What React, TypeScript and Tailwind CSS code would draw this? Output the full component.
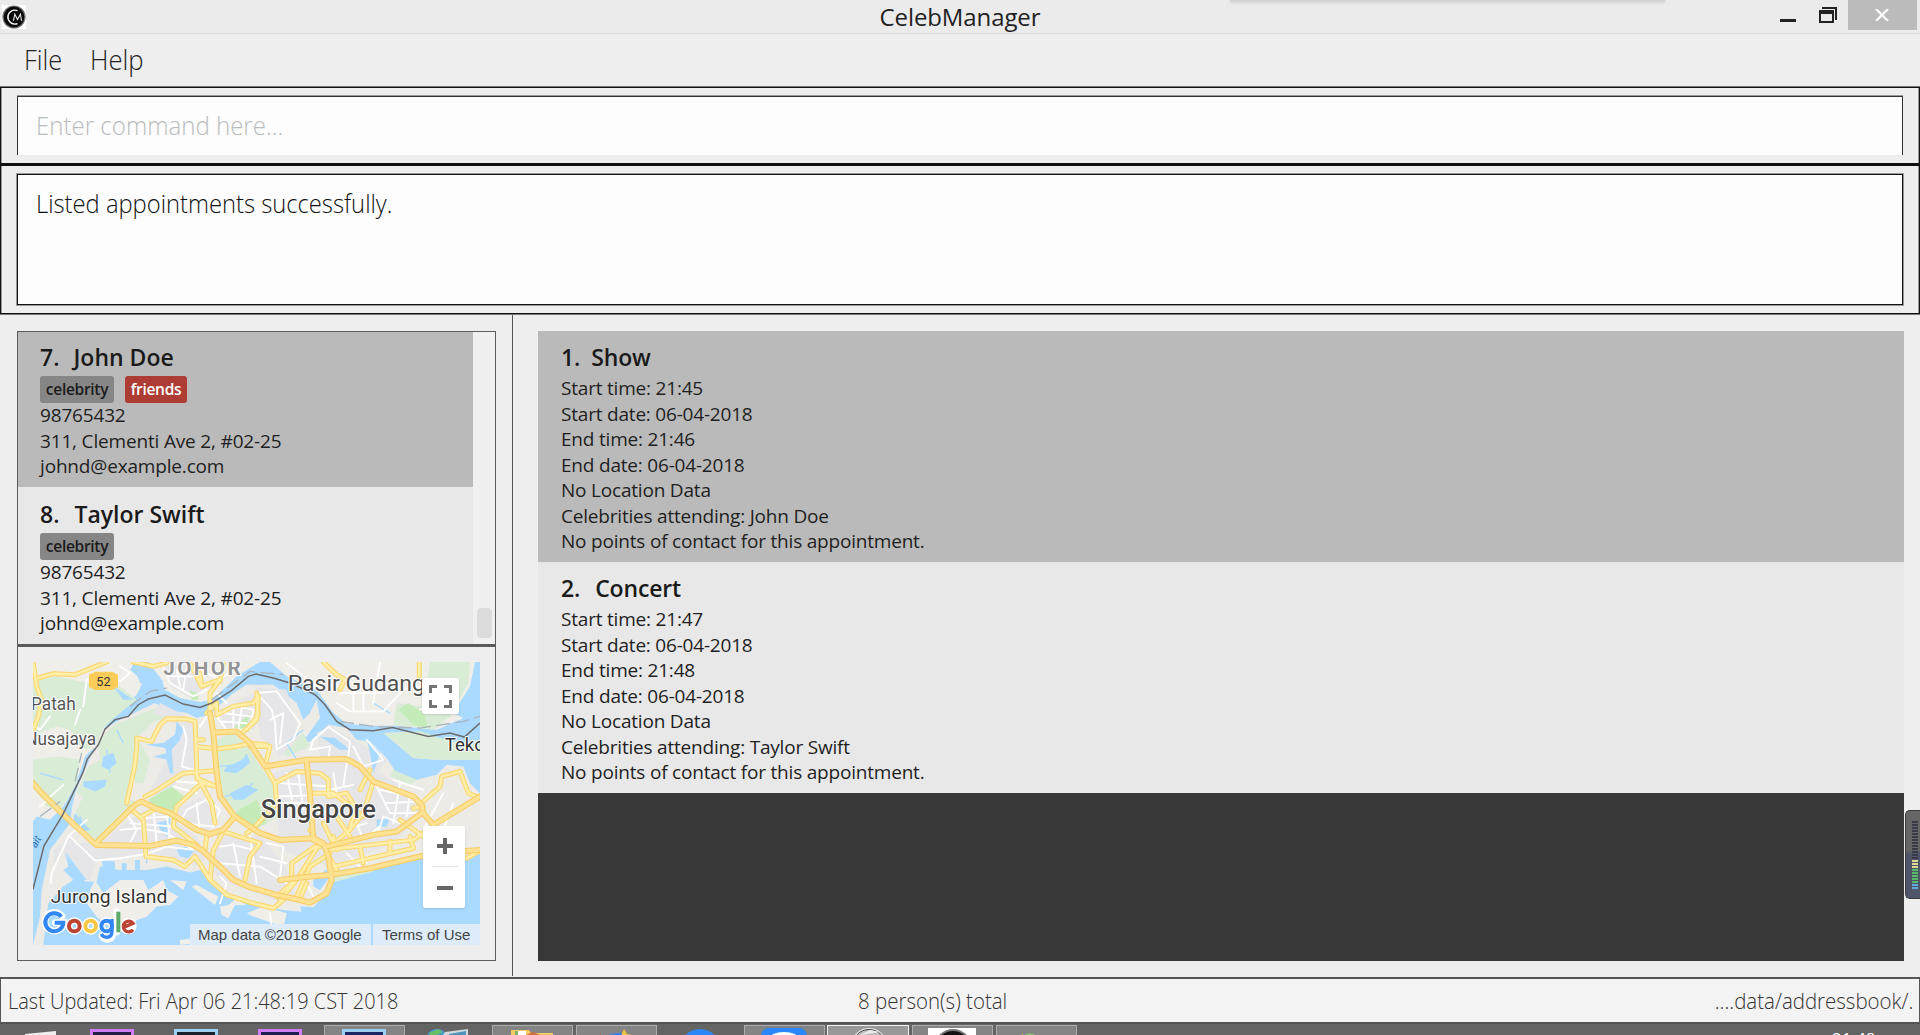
import React from "react";

const PERSONS = [
  { id: 7, name: "John Doe", tags: ["celebrity", "friends"], box: "h-[155px] pt-[9px] bg-[#bababa]", gap: "pl-[14px]" },
  { id: 8, name: "Taylor Swift", tags: ["celebrity"], box: "h-[157px] pt-[11px] bg-[#e8e8e8]", gap: "pl-[15px]" },
];

const APPOINTMENTS = [
  { id: 1, title: "Show", start: "21:45", end: "21:46", who: "John Doe", bg: "bg-[#bababa]", gap: "pl-[11px]" },
  { id: 2, title: "Concert", start: "21:47", end: "21:48", who: "Taylor Swift", bg: "bg-[#e8e8e8]", gap: "pl-[15px]" },
];

function TitleBar() {
  return (
    <header className="relative flex h-[34px] shrink-0 items-start justify-between border-b border-[#d9d9d9] bg-[#ebebeb]">
      <div className="ml-[2px] mt-[5px] h-6 w-6 bg-white">
        <svg viewBox="0 0 24 24" className="h-6 w-6">
          <circle cx="12" cy="12" r="11.6" fill="#777" />
          <circle cx="12" cy="12" r="10.4" fill="#0a0a0a" />
          <path d="M15.5 5.6A7 7 0 1 0 15.5 18.6" fill="none" stroke="#fff" strokeWidth="1.3" />
          <path d="M9.4 6.2A6.6 6.6 0 0 0 9.4 18" fill="none" stroke="#ddd" strokeWidth="0.8" />
          <path d="M11.4 15.8 12.8 9.2 15.5 14.6 18.4 9.2 19.6 15.8" fill="none" stroke="#e4e4e4" strokeWidth="1.1" />
        </svg>
      </div>
      <h1 className="absolute left-1/2 top-0 -translate-x-1/2 whitespace-nowrap text-[24px] leading-[34px] tracking-[-0.1px] text-[#222]">CelebManager</h1>
      <div className="absolute left-[1230px] top-0 h-[2px] w-[435px] bg-[#d4d4d4] shadow-[0_1px_3px_#cfd3cf]" />
      <div className="flex items-start pr-[3px]">
        <div className="mr-[23px] mt-[19px] h-[3px] w-4 bg-[#222]" />
        <svg viewBox="0 0 18 16" className="mr-[11px] mt-[7px] h-4 w-[18px]">
          <path d="M3 0H18V13H16V2H3Z" fill="#222" />
          <path fillRule="evenodd" d="M0 3H15V16H0ZM2 7V14H13V7Z" fill="#222" />
        </svg>
        <div className="flex h-[30px] w-[69px] items-center justify-center bg-[#bbb] pr-[2px]">
          <svg viewBox="0 0 14 12" className="h-3 w-[14px]">
            <path d="M1 0 13 12M13 0 1 12" stroke="#fff" strokeWidth="2.2" />
          </svg>
        </div>
      </div>
    </header>
  );
}

function Tag({ label }: { label: string }) {
  const color = label === "friends" ? "bg-[#ad3c35] text-white w-[62px]" : "bg-[#868686] text-[#1b1b1b] w-[74px]";
  return (
    <span className={`flex h-[27px] items-center justify-center rounded-[3px] text-[15.5px] font-semibold tracking-[-0.3px] ${color}`}>
      {label}
    </span>
  );
}

function PersonList() {
  return (
    <div className="flex h-[312px]">
      <ul className="w-[455px]">
        {PERSONS.map((p) => (
          <li key={p.id} className={`pl-[22px] ${p.box}`}>
            <h2 className="flex h-8 text-[23px] font-semibold leading-8">
              <span>{p.id}.</span>
              <span className={p.gap}>{p.name}</span>
            </h2>
            <div className="mt-[3px] flex h-[27px] items-start gap-[11px]">
              {p.tags.map((t) => (
                <Tag key={t} label={t} />
              ))}
            </div>
            <div className="text-[19px] leading-[25.5px] tracking-[-0.17px] text-[#1f1f1f]">
              <p>98765432</p>
              <p>311, Clementi Ave 2, #02-25</p>
              <p>johnd@example.com</p>
            </div>
          </li>
        ))}
      </ul>
      <div className="flex flex-1 flex-col items-center justify-end bg-[#f0f0f0] pb-[6px] pl-px">
        <div className="h-[30px] w-[15px] rounded-[4px] bg-[#dcdcdc]" />
      </div>
    </div>
  );
}

const GREENS = [
  "M39 95 110 80 200 100 300 110 350 150 300 190 250 235 230 280 200 300 170 280 150 240 110 230 60 250 39 240Z",
  "M39 330 120 320 180 330 170 400 120 480 80 470 39 400Z",
  "M285 225 420 170 470 200 400 215 350 265 335 360 320 450 360 455 280 530 220 575 160 500 190 440 170 430 205 350 240 330 235 270Z",
  "M590 270 640 250 690 300 720 350 760 400 790 500 730 520 660 490 610 460 590 380Z",
  "M360 280 390 330 370 400 345 400 340 310Z",
  "M770 290 850 250 870 290 800 320Z",
  "M1090 250 1200 245 1290 275 1380 285 1380 330 1250 330 1180 325Z",
  "M1230 37 1350 37 1345 100 1290 200 1240 240 1120 225 1130 160 1210 170Z",
  "M1120 360 1190 390 1170 405 1110 380Z",
  "M930 685 1060 650 1060 665 950 695Z",
];

const DARK_GREENS = [
  "M385 450 455 410 500 445 455 485 400 470Z",
  "M640 490 710 450 740 520 700 540Z",
  "M1135 180 1165 160 1210 190 1225 235 1180 225Z",
  "M510 125 535 130 535 150 515 150Z",
  "M640 235 690 190 680 240Z",
];

const URBAN = [
  "M290 540 370 480 460 510 530 560 560 620 530 650 400 610 230 630 170 580 250 575Z",
  "M420 160 520 210 530 360 480 390 420 440 390 420 440 330 480 230 400 190Z",
  "M470 480 540 440 600 500 560 550 480 520Z",
  "M600 180 700 130 740 150 700 240 620 250Z",
  "M700 110 800 120 840 260 780 320 720 260Z",
  "M760 370 900 330 1020 330 1190 440 1210 500 1100 590 920 650 780 600Z",
  "M890 250 930 230 1000 270 1100 330 1060 380 900 320Z",
  "M590 560 720 560 790 640 830 740 760 750 600 690 560 630Z",
  "M430 50 530 45 560 110 520 150 450 110Z",
  "M150 560 230 630 210 690 180 690 130 600 100 650 100 600Z",
];

const WATERS = [
  "M470 215 490 240 480 270 455 300 460 370 450 370 440 330 400 320 440 310 435 295 375 285 430 280 465 255Z",
  "M190 395 260 390 255 410 225 425 190 410Z",
  "M250 320 280 310 290 340 265 360 245 350Z",
  "M620 350 670 330 680 310 690 340 650 370 610 365Z",
  "M630 430 680 405 715 420 670 450 640 450Z",
  "M470 600 500 590 525 600 505 625 480 620Z",
  "M410 520 450 510 445 550 425 545Z",
  "M280 110 310 130 340 150 310 150Z",
  "M345 60 400 75 430 95 420 110 360 100Z",
  "M1070 510 1110 505 1100 530 1070 530Z",
  "M165 490 210 540 195 545 160 510Z",
  "M900 260 945 265 990 300 960 300Z",
  "M1040 270 1080 310 1060 370 1050 310Z",
  "M880 690 930 650 930 680 900 720 880 710Z",
  "M245 630 285 635 285 660 250 665ZM305 640 320 640 320 670 305 670ZM345 630 360 630 360 670 345 670ZM135 605 200 690 175 690Z",
];

const MINOR = [
  "M92 700 95 670 145 560 150 560 225 632 300 625 380 612 440 590 520 600",
  "M150 555 200 510M60 470 130 405M190 170 200 90 250 75 300 95 330 70 300 50M39 225 60 240 90 200M165 225 180 180",
  "M300 540 360 535 440 550 520 600M320 490 350 540 330 580M400 480 410 580M440 490 450 580M360 505 460 500M330 520 460 530",
  "M490 230 500 270 485 350 520 360M470 395 540 400M460 410 530 430M540 230 560 200M500 480 560 450 600 480 580 530 480 520 500 480M530 460 540 550",
  "M590 200 650 170 700 180 690 240 620 240ZM600 215 680 220M640 175 640 245M665 175 655 240M610 190 690 200",
  "M710 130 770 125 840 220 820 270 770 300 765 220 755 180 710 130M750 210 790 190 780 280",
  "M870 300 880 270 925 232 990 275 985 320M925 330 930 290 870 300M1000 290 1040 370M1040 270 1090 330 1030 350",
  "M780 400 930 410M770 440 920 435M800 370 820 470M835 370 850 480M880 430 1000 405M940 370 950 430M980 340 970 410M760 460 870 460",
  "M1060 390 1110 490 1200 490M1080 420 1180 440M1120 390 1210 420M1100 460 1190 455M1140 400 1120 520M1170 430 1160 500",
  "M1070 560 1090 500 1140 520M1010 520 1030 570 1080 530M960 500 970 540 1040 520M1270 430 1215 530M1300 460 1270 540",
  "M640 580 660 680M600 590 640 585 700 600M600 640 720 650 800 700M690 560 710 700M740 580 790 590 780 680M720 620 800 640M600 680 620 700 600 760",
  "M430 50 450 100 520 140 560 120M470 60 480 110M500 50 490 120M440 80 550 80M540 60 600 90 640 60M590 130 620 160",
  "M950 160 990 185 1090 185 1150 120 1200 110M960 130 1090 130M1000 120 1000 185M1030 100 1030 185M1080 37 1060 160M800 40 890 110 960 110M1200 180 1250 160 1290 170",
  "M750 790 755 830 780 850M860 700 880 740M980 610 1020 650M1040 640 1010 590",
];

const ROADS = [
  "M39 400 60 425 128 492 228 585 390 588 470 572 520 585 545 600 600 650 640 690 690 712 770 735 830 748 870 758 920 730 935 690 925 620 910 580 880 565 780 570 720 550 645 500 610 540 570 553 530 540 450 490 405 475 365 455 345 465 228 580",
  "M570 190 580 250 590 370 600 440 640 495",
  "M590 248 650 245 690 280 735 350 860 330 980 328 1020 350 1060 395 1180 440 1205 465 1210 490 1240 525 1380 440",
  "M1205 490 1130 545 1060 555 920 590 880 570 870 430 860 335",
  "M780 690 870 680 930 675 1050 655 1240 610 1380 600",
];

const ARTERIES = [
  "M39 37 50 110 65 150 55 200 39 240M55 85 100 72 165 75 260 37",
  "M320 460 345 345 350 290 350 265 395 275 420 225 440 207 500 208 525 215 530 340 530 375 575 460 585 520",
  "M375 440 405 425 490 370 590 362M530 290 590 298 650 290 690 280 740 285",
  "M550 270 530 270M330 475 370 510 378 620 460 630 495 650 525 620 545 650 570 690 620 735 700 760 760 775 790 750",
  "M365 500 400 480M465 490 470 470 545 400 590 410M465 490 460 530 530 585",
  "M560 560 555 600M570 690 580 600 610 545 720 580 690 620 675 690M530 385 590 410",
  "M560 190 570 180 590 160 590 195 640 170 700 160 715 140 710 210 665 250M540 70 545 110 600 90 570 130 570 190M340 37 400 50 440 40M510 40 545 110M610 40 600 95",
  "M710 130 715 195 680 240M735 350 765 400 770 460 700 535 680 550M765 400 830 365 900 370 925 390 925 440 980 430 1010 480 990 530",
  "M690 290 750 290 735 350M870 430 940 430 980 460 1030 500M1060 395 1030 490 990 540 930 590",
  "M1050 360 1020 420M920 600 1180 570 1215 545M940 650 1180 595 1170 560M1020 590 1030 640M1110 575 1110 610M1140 510 1210 560M1180 475 1210 470",
  "M1210 455 1260 410 1265 380 1320 365 1345 430 1380 445M885 590 815 640 815 700 770 740M900 580 830 690 780 750M930 610 870 650 830 740M940 560 950 600M870 540 900 590M910 520 940 580M950 500 990 560",
  "M910 37 950 75 975 90 960 120M1198 37 1198 80M930 625 950 660M1380 602 1340 625M840 745 860 700",
];

function Roads({ list, outer, inner, wide }: { list: string[]; outer: string; inner: string; wide: number }) {
  return (
    <g fill="none" strokeLinejoin="round" strokeLinecap="round">
      {list.map((d) => (
        <path key={d} d={d} stroke={outer} strokeWidth={wide} />
      ))}
      {list.map((d) => (
        <path key={d} d={d} stroke={inner} strokeWidth={wide - 7} />
      ))}
    </g>
  );
}

function MapView() {
  return (
    <div className="relative ml-[15px] mt-[15px] h-[283px] w-[447px] overflow-hidden">
      <svg viewBox="39 37 1341 848" preserveAspectRatio="none" className="h-full w-full font-[Roboto]">
        <rect x="39" y="37" width="1341" height="848" fill="#aadaff" />
        <g fill="#f0eee8">
          <path d="M39 37H345L330 60 370 95 350 135 325 155 300 190 265 215 245 250 225 290 195 320 180 365 165 410 130 470 90 510 50 500 39 515Z" />
          <path d="M385 37H720L690 55 650 80 620 110 575 150 540 157 480 145 435 120 425 90Z" />
          <path d="M750 37H1365L1350 110 1300 190 1330 205 1250 240 1130 228 1040 228 980 222 940 190 890 120 800 80Z" />
          <path d="M1090 250 1200 245 1290 275 1380 285V330L1250 330 1180 325Z" />
        </g>
        <path
          fill="#ecebe6"
          d="M250 240 300 210 380 172 405 160 440 180 500 190 530 205 570 195 600 165 640 130 680 105 760 105 830 160 850 210 870 190 890 150 900 205 860 260 800 310 880 270 925 225 980 235 1010 270 1050 275 1100 325 1130 370 1190 390 1250 375 1280 345 1330 350 1350 400 1380 430V610L1340 625 1210 622 1090 652 990 680 930 700 930 720 880 772 840 770 845 785 790 780 700 765 640 740 610 720 570 690 540 660 510 668 440 650 380 660 300 660 240 650 230 695 195 695 160 650 135 610 145 650 130 660 160 690 130 710 85 760 70 885 39 885 60 800 65 720 90 600 150 520 155 480 165 430 190 370 210 325 225 285Z"
        />
        <path fill="#f0eee8" d="M210 720 225 690 250 730 300 690 370 690 385 720 430 690 440 720 475 740 450 765 410 770 380 800 350 810 320 850 280 840 230 800 200 760ZM515 710 530 705 595 740 585 765ZM600 770 625 765 650 745 680 765 645 765 625 805 605 795ZM680 790 730 770 800 790 790 830 700 800ZM450 690 500 695 490 720ZM480 870 520 865 540 880 480 884Z" />
        <g fill="#d8ecd6">{GREENS.map((d) => <path key={d} d={d} />)}</g>
        <g fill="#e6e6e8">{URBAN.map((d) => <path key={d} d={d} />)}</g>
        <g fill="#c5ebb9">{DARK_GREENS.map((d) => <path key={d} d={d} />)}</g>
        <g fill="#aadaff">{WATERS.map((d) => <path key={d} d={d} />)}</g>
        <g fill="none" stroke="#aadaff" strokeWidth="4">
          <path d="M600 350 650 345 680 320M615 440 660 430 700 400M200 560 180 500M260 300 270 370M290 240 310 280M60 370 130 390M1060 160 1110 190M830 330 800 280 850 240M450 500 440 560M380 660V690M380 640V600" />
        </g>
        <g fill="none" stroke="#fff" strokeWidth="5.5" strokeLinejoin="round" strokeLinecap="round">
          {MINOR.map((d) => <path key={d} d={d} />)}
        </g>
        <Roads list={ARTERIES} outer="#fbd772" inner="#ffeea8" wide={15} />
        <Roads list={ROADS} outer="#f8cd68" inner="#fde293" wide={18} />
        <g fill="none" stroke="#a9b4bd" strokeWidth="4" strokeDasharray="42 16">
          <path d="M60 500 120 455M165 395 185 310M330 170 390 125 440 115M575 150 690 65 790 75M960 215 1060 230 1200 235 1330 215 1380 200" />
        </g>
        <path fill="none" stroke="#6c6c6c" strokeWidth="4.5" d="M39 718 72 588 128 495 188 370 202 328 235 285 255 238 285 210 325 200 355 165 385 148 435 136 490 163 540 173 575 160 635 122 685 80 708 73 760 85 810 100 855 120 885 135 915 165 950 215 990 240 1060 243 1118 233 1225 260 1290 250 1333 262 1380 220" />
        <path d="M207 75 225 66H276L294 75V112L276 121H225L207 112Z" fill="#fbcd58" />
        <g stroke="#fff" strokeWidth="6" strokeLinejoin="round" paintOrder="stroke" fill="#4a4a4a">
          <text x="229" y="108" fontSize="38" fill="#333" stroke="none">52</text>
          <text x="430" y="75" fontSize="62" fontWeight="700" fill="#949494" textLength="232">JOHOR</text>
          <text x="33" y="181" fontSize="53" fill="#555" textLength="134" lengthAdjust="spacingAndGlyphs">Patah</text>
          <text x="16" y="286" fontSize="53" fill="#555" textLength="212" lengthAdjust="spacingAndGlyphs">Nusajaya</text>
          <text x="803" y="125" fontSize="64" fill="#505050" textLength="412" lengthAdjust="spacingAndGlyphs">Pasir Gudang</text>
          <text x="1274" y="304" fontSize="56" fill="#333">Tekong</text>
          <text x="722" y="504" fontSize="75" fontWeight="500" fill="#444" textLength="346" lengthAdjust="spacingAndGlyphs">Singapore</text>
          <text x="92" y="759" fontSize="57" fill="#333" textLength="350" lengthAdjust="spacingAndGlyphs">Jurong Island</text>
        </g>
        <text x="48" y="596" fontSize="32" fontStyle="italic" fill="#2c6dad" transform="rotate(-60 48 596)">ait</text>
        <g fill="none" strokeWidth="12">
          <g stroke="#fff" strokeWidth="20" strokeLinecap="round">
            <path d="M126 799A28 28 0 1 0 131 818H106M290 785V846M278 857A17 17 0 0 1 246 857" />
            <circle cx="163" cy="828" r="16" /><circle cx="212" cy="828" r="16" /><circle cx="261" cy="828" r="16" /><circle cx="325" cy="828" r="15" />
          </g>
          <path d="M124 800A27 27 0 1 0 130 818H104" stroke="#3287f5" />
          <circle cx="163" cy="828" r="16" stroke="#bd4334" />
          <circle cx="212" cy="828" r="16" stroke="#f8c745" />
          <path d="M276 807V843Q276 862 260 862 248 862 244 852" stroke="#3287f5" strokeWidth="10" />
          <circle cx="260" cy="828" r="16" stroke="#3287f5" />
          <path d="M295 785V847" stroke="#5bac68" />
          <path d="M309 833 339 820A16 16 0 1 0 339 839" stroke="#bd4334" strokeWidth="10" />
        </g>
      </svg>
      <div className="absolute right-[21px] top-[16px] flex h-[36px] w-[37px] items-center justify-center rounded-[2px] bg-white shadow-sm">
        <svg viewBox="0 0 23 23" className="h-[23px] w-[23px]" fill="none" stroke="#757575" strokeWidth="3">
          <path d="M1.5 8V1.5H8M15 1.5H21.5V8M21.5 15V21.5H15M8 21.5H1.5V15" />
        </svg>
      </div>
      <div className="absolute bottom-[37px] right-[15px] flex h-[82px] w-[42px] flex-col items-center rounded-[2px] bg-white pl-px shadow">
        <div className="flex h-[40px] items-center">
          <svg viewBox="0 0 16 16" className="h-4 w-4"><path d="M8 0V16M0 8H16" stroke="#666" strokeWidth="4" /></svg>
        </div>
        <div className="h-px w-[26px] bg-[#e3e3e3]" />
        <div className="flex h-[41px] items-center">
          <div className="h-1 w-4 bg-[#666]" />
        </div>
      </div>
      <div className="absolute bottom-0 right-0 flex h-[21px] gap-[2px] whitespace-nowrap font-['Liberation_Sans'] text-[15px] leading-[21px] text-[#444]">
        <div className="w-[181px] bg-[#deebf8] pl-[8px]">Map data ©2018 Google</div>
        <div className="w-[107px] bg-[#deebf8] pl-[9px]">Terms of Use</div>
      </div>
    </div>
  );
}

function AppointmentList() {
  return (
    <div className="ml-[25px] mt-[17px] h-[630px] w-[1366px] bg-[#383838]">
      {APPOINTMENTS.map((a) => (
        <article key={a.id} className={`h-[231px] pl-[23px] pt-[10px] ${a.bg}`}>
          <h2 className="flex h-8 text-[23px] font-semibold leading-8 tracking-[-0.15px]">
            <span>{a.id}.</span>
            <span className={a.gap}>{a.title}</span>
          </h2>
          <div className="mt-[3px] text-[19px] leading-[25.5px] tracking-[-0.2px] text-[#1f1f1f]">
            <p>Start time: {a.start}</p>
            <p>Start date: 06-04-2018</p>
            <p>End time: {a.end}</p>
            <p>End date: 06-04-2018</p>
            <p>No Location Data</p>
            <p>Celebrities attending: {a.who}</p>
            <p>No points of contact for this appointment.</p>
          </div>
        </article>
      ))}
    </div>
  );
}

function Slot({ className, children }: { className: string; children?: React.ReactNode }) {
  return <div className={`h-full shrink-0 overflow-hidden ${className}`}>{children}</div>;
}

const ACTIVE = "w-[81px] border border-b-0 border-[#acacac] bg-[#848484]";

function Taskbar() {
  return (
    <footer className="relative flex h-[11px] shrink-0 overflow-hidden bg-[#646464] pt-px">
      <Slot className="w-[90px]"><svg className="h-[10px] w-[90px]"><path d="M25 9 56 6V10H25Z" fill="#eee" /></svg></Slot>
      <Slot className="mr-[40px] w-[44px] pt-1"><div className="h-3 border-[3px] border-[#d07dfa] bg-[#211f45]" /></Slot>
      <Slot className="mr-[40px] w-[44px] pt-1"><div className="h-3 border-[3px] border-[#9bd0f5] bg-[#17222c]" /></Slot>
      <Slot className="mr-[22px] w-[44px] pt-1"><div className="h-3 border-[3px] border-[#d07dfa] bg-[#1c1c50]" /></Slot>
      <Slot className={`${ACTIVE} pl-[17px] pt-[3px]`}><div className="h-3 w-[44px] border-[3px] border-[#9bd0f5] bg-[#1b2765]" /></Slot>
      <Slot className="w-[87px]">
        <svg className="h-[10px] w-[87px]"><circle cx="32" cy="15" r="11" fill="#4398cf" /><path d="M24 8 33 4 38 7 32 10H25Z" fill="#65bf69" /><path d="M40 7 63 4V10H38Z" fill="#d3d8db" /><path d="M44 9 61 6V10H44Z" fill="#4d94bc" /></svg>
      </Slot>
      <Slot className={ACTIVE}>
        <svg className="h-[10px] w-[81px]"><path d="M18 4H36L38 7H60V12H18Z" fill="#f1c967" /><path d="M23 5H33V9H23Z" fill="#fff" /><path d="M22 5H25V9H22Z" fill="#7fb268" /><path d="M33 9 40 6 47 9Z" fill="#d76f3c" /></svg>
      </Slot>
      <Slot className={`${ACTIVE} ml-[3px]`}>
        <svg className="h-[10px] w-[81px]"><ellipse cx="42" cy="13" rx="14" ry="6" fill="#2c83f0" /><path d="M47 3 50 8 55 9 50 12H43Z" fill="#f5c441" /><path d="M23 8 26 11H23Z" fill="#c3362e" /></svg>
      </Slot>
      <Slot className="w-[87px]"><svg className="h-[10px] w-[87px]"><circle cx="43" cy="24" r="20" fill="#2b87f5" /></svg></Slot>
      <Slot className={ACTIVE}>
        <svg className="h-[10px] w-[81px]"><rect x="16" y="2" width="46" height="30" rx="8" fill="#2b87fb" /><ellipse cx="39" cy="13" rx="15" ry="7" fill="#fff" /></svg>
      </Slot>
      <Slot className="ml-[2px] w-[82px] border border-b-0 border-[#f0f0f0] bg-[#999]">
        <svg className="h-[10px] w-[81px]"><circle cx="41" cy="20" r="18" fill="#e3e3e3" /><circle cx="41" cy="20" r="16.5" fill="#bcbcbc" stroke="#4b4b4b" /><path d="M32 9 42 4 52 6Z" fill="#ededed" /></svg>
      </Slot>
      <Slot className={`${ACTIVE} ml-[3px]`}>
        <svg className="h-[10px] w-[81px]"><rect x="15" y="2" width="48" height="20" fill="#fff" /><circle cx="40" cy="22" r="18" fill="#111" stroke="#777" strokeWidth="2" /></svg>
      </Slot>
      <Slot className={`${ACTIVE} ml-[3px]`}>
        <svg className="h-[10px] w-[81px]"><ellipse cx="33" cy="12" rx="7" ry="4.5" fill="#83c66a" /><path d="M22 10 26 8V10Z" fill="#e5c04b" /></svg>
      </Slot>
      <span className="absolute left-[1832px] top-[5px] text-[17px] leading-[20px] text-white">21:48</span>
    </footer>
  );
}

function MeterGadget() {
  return (
    <div className="absolute right-0 top-[810px] flex h-[89px] w-[15px] justify-end overflow-hidden rounded-l-[5px] border border-r-0 border-[#3a3a3a] bg-linear-to-b from-[#666] from-45% to-[#50556a] to-50% pr-[2px] pt-[10px]">
      <div className="flex w-[6px] flex-col gap-px">
        {Array.from({ length: 23 }, (_, i) => (
          <div key={i} className={`h-[2px] shrink-0 ${i < 13 ? "bg-[#383b47]" : i < 16 ? "bg-[#ddd694]" : i < 21 ? "bg-[#58b968]" : "bg-[#61a8de]"}`} />
        ))}
      </div>
    </div>
  );
}

export default function App() {
  return (
    <div className="relative flex h-[1035px] w-[1920px] flex-col overflow-hidden bg-[#eee] font-['Open_Sans',sans-serif] text-[#1a1a1a]">
      <TitleBar />
      <nav className="flex h-[53px] shrink-0 pl-[24px] text-[27px] font-light leading-[52px] text-[#222]">
        <span className="w-[66px]"><span className="inline-block origin-left scale-x-[0.94]">File</span></span>
        <span className="inline-block origin-left scale-x-[0.95]">Help</span>
      </nav>
      <section className="h-[79px] shrink-0 border border-b-[3px] border-[#111] px-4 pt-2 shadow-[0_-1px_#777,inset_1px_0_#999,inset_-1px_0_#999]">
        <div className="h-[59px] border border-b-0 border-[#333] bg-[#fdfdfd] pl-[18px] text-[26.5px] font-light leading-[56px] text-[#b9bcbc] shadow-[0_-1px_#999]">
          <span className="inline-block origin-left scale-x-[0.908]">Enter command here...</span>
        </div>
      </section>
      <section className="h-[148px] shrink-0 border border-t-0 border-[#111] px-4 pt-[8px] shadow-[0_1px_#777,inset_1px_0_#999,inset_-1px_0_#999]">
        <div className="h-[131px] border border-[#111] bg-[#fdfdfd] pl-[18px] text-[26.5px] font-light leading-[56px] text-[#111] shadow-[0_0_0_1px_#999]">
          <span className="inline-block origin-left scale-x-[0.896]">Listed appointments successfully.</span>
        </div>
      </section>
      <main className="flex h-[663px] shrink-0">
        <aside className="mt-px h-[661px] w-[513px] border-r border-[#555] pl-[17px] pt-4">
          <div className="h-[630px] w-[479px] border border-[#5c5c5c]">
            <PersonList />
            <div className="border-t-[3px] border-[#5a5a5a]">
              <MapView />
            </div>
          </div>
        </aside>
        <AppointmentList />
      </main>
      <div className="flex h-[47px] shrink-0 items-center border-2 border-x border-[#555] bg-[#f3f3f3] px-[6px] text-[22.5px] font-light leading-[43px] text-[#333]">
        <span className="w-[851px] pl-px"><span className="inline-block origin-left scale-x-[0.888]">Last Updated: Fri Apr 06 21:48:19 CST 2018</span></span>
        <span className="inline-block origin-left scale-x-[0.91]">8 person(s) total</span>
        <span className="flex-1 text-right"><span className="inline-block origin-right scale-x-[0.91]">....data/addressbook/.</span></span>
      </div>
      <Taskbar />
      <MeterGadget />
    </div>
  );
}
